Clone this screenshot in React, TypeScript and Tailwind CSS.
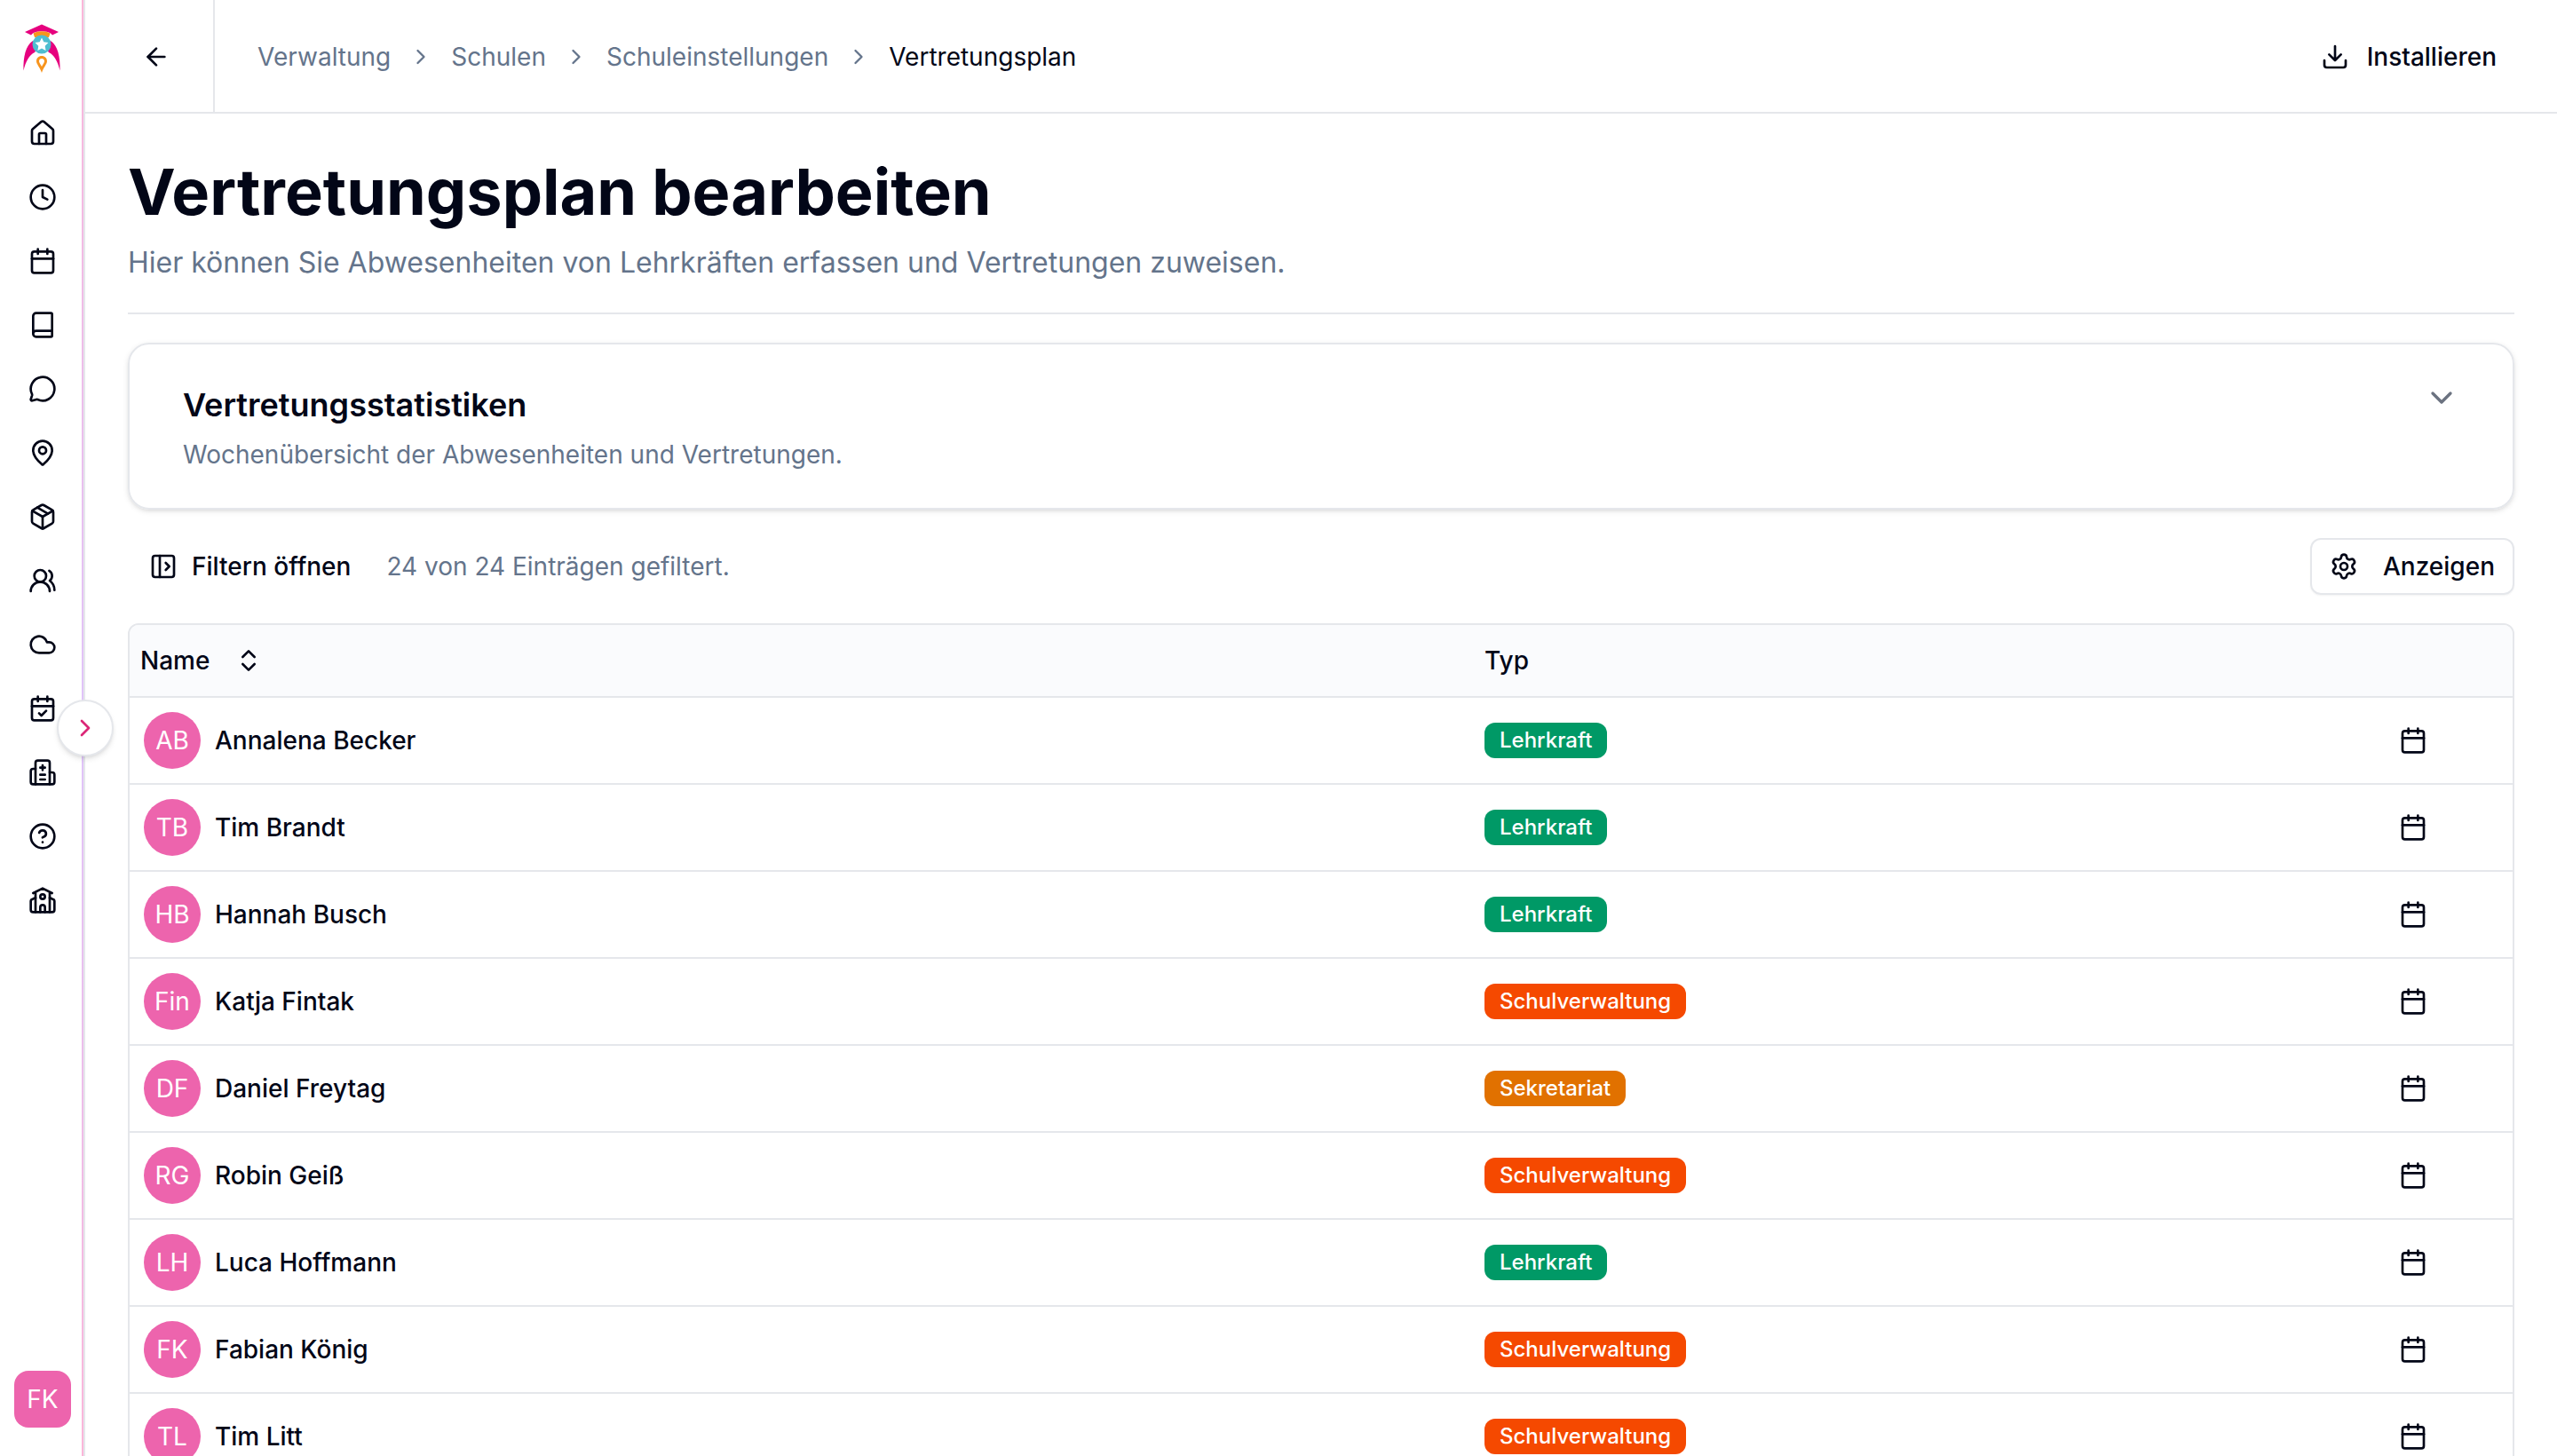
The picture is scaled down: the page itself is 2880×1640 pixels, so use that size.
import type { ReactNode } from 'react';
import {
  ArrowLeft,
  Book,
  Calendar,
  CalendarCheck,
  ChevronDown,
  ChevronRight,
  ChevronsUpDown,
  CircleQuestionMark,
  Clock,
  Cloud,
  House,
  MapPin,
  MessageCircle,
  Package,
  PanelLeftOpen,
  Settings,
  UsersRound,
} from 'lucide-react';

type Role = 'Lehrkraft' | 'Schulverwaltung' | 'Sekretariat';

interface Person {
  initials: string;
  name: string;
  role: Role;
}

const ROLE_COLORS: Record<Role, string> = {
  Lehrkraft: 'bg-[#009966]',
  Schulverwaltung: 'bg-[#f54900]',
  Sekretariat: 'bg-[#e17100]',
};

const PEOPLE: Person[] = [
  { initials: 'AB', name: 'Annalena Becker', role: 'Lehrkraft' },
  { initials: 'TB', name: 'Tim Brandt', role: 'Lehrkraft' },
  { initials: 'HB', name: 'Hannah Busch', role: 'Lehrkraft' },
  { initials: 'Fin', name: 'Katja Fintak', role: 'Schulverwaltung' },
  { initials: 'DF', name: 'Daniel Freytag', role: 'Sekretariat' },
  { initials: 'RG', name: 'Robin Geiß', role: 'Schulverwaltung' },
  { initials: 'LH', name: 'Luca Hoffmann', role: 'Lehrkraft' },
  { initials: 'FK', name: 'Fabian König', role: 'Schulverwaltung' },
  { initials: 'TL', name: 'Tim Litt', role: 'Schulverwaltung' },
];

function StrokeIcon({ children }: { children: ReactNode }) {
  return (
    <svg
      className="size-8"
      viewBox="0 0 24 24"
      fill="none"
      stroke="currentColor"
      strokeWidth="2"
      strokeLinecap="round"
      strokeLinejoin="round"
      aria-hidden="true"
    >
      {children}
    </svg>
  );
}

function HospitalIcon() {
  return (
    <StrokeIcon>
      <path d="M12 6v4M14 14h-4M14 18h-4M14 8h-4" />
      <path d="M18 12h2a2 2 0 0 1 2 2v6a2 2 0 0 1-2 2H4a2 2 0 0 1-2-2v-9a2 2 0 0 1 2-2h2" />
      <path d="M18 22V4a2 2 0 0 0-2-2H8a2 2 0 0 0-2 2v18" />
    </StrokeIcon>
  );
}

function SchoolIcon() {
  return (
    <StrokeIcon>
      <path d="M14 22v-4a2 2 0 1 0-4 0v4" />
      <path d="m18 10 2.5 1a2 2 0 0 1 1.5 2v7a2 2 0 0 1-2 2H4a2 2 0 0 1-2-2v-7a2 2 0 0 1 1.500-2L6 10" />
      <path d="M18 5v17M6 5v17M4 6l8-4 8 4" />
      <circle cx="12" cy="9" r="2" />
    </StrokeIcon>
  );
}

function DownloadIcon() {
  return (
    <StrokeIcon>
      <path d="M21 15v4a2 2 0 0 1-2 2H5a2 2 0 0 1-2-2v-4" />
      <path d="m7 10 5 5 5-5M12 15V3" />
    </StrokeIcon>
  );
}

function Logo() {
  return (
    <svg className="h-14 w-[42px]" viewBox="0 0 42 56" aria-hidden="true">
      <path d="M11 20C3 25 0 38 .5 53.500 3 43 7 36 13 33L21 24l8 9c6 3 10 10 12.500 20.500C42 38 39 25 31 20Z" fill="#e6007e" />
      <path d="M2 10 21 1.500 40 10l-7 3.500-2-2C26 8.500 16 8.500 11 11.500l-2 2Z" fill="#e6007e" />
      <path d="M11.500 11.500c5-3 14-3 19 0L29 16H13Z" fill="#f7941d" />
      <circle cx="21" cy="24" r="10.500" fill="#4fbdd0" />
      <path d="m21 16.500 2.300 4.800 5.200.7-3.800 3.700.9 5.200-4.600-2.500-4.600 2.500.9-5.200-3.800-3.700 5.200-.7Z" fill="#fff" />
      <path
        d="M21 37c3.500 0 6 2.500 6 6 0 3-4 7-6 13-2-6-6-10-6-13 0-3.500 2.500-6 6-6Zm0 3c-1.800 0-3 1.300-3 3 0 1.500 1.800 3.500 3 6 1.200-2.500 3-4.500 3-6 0-1.700-1.200-3-3-3Z"
        fill="#f7941d"
      />
    </svg>
  );
}

const NAV_ITEMS = [
  { label: 'Start', icon: <House className="size-8" /> },
  { label: 'Zeiten', icon: <Clock className="size-8" /> },
  { label: 'Kalender', icon: <Calendar className="size-8" /> },
  { label: 'Klassenbuch', icon: <Book className="size-8" /> },
  { label: 'Nachrichten', icon: <MessageCircle className="size-8" /> },
  { label: 'Orte', icon: <MapPin className="size-8" /> },
  { label: 'Inventar', icon: <Package className="size-8" /> },
  { label: 'Gruppen', icon: <UsersRound className="size-8" /> },
  { label: 'Cloud', icon: <Cloud className="size-8" /> },
  { label: 'Termine', icon: <CalendarCheck className="size-8" /> },
  { label: 'Krankmeldungen', icon: <HospitalIcon /> },
  { label: 'Hilfe', icon: <CircleQuestionMark className="size-8" /> },
  { label: 'Verwaltung', icon: <SchoolIcon /> },
];

function Sidebar() {
  return (
    <aside className="relative flex w-24 shrink-0 border-r-2 border-[#e5e7eb]">
      <div className="flex flex-1 flex-col items-center pt-[26px] pb-8 pl-1">
        <a href="#start" aria-label="Startseite" className="mr-0.5">
          <Logo />
        </a>
        <nav className="mt-13 flex flex-1 flex-col gap-10">
          {NAV_ITEMS.map((item) => (
            <a key={item.label} href="#nav" aria-label={item.label}>
              {item.icon}
            </a>
          ))}
        </nav>
        <button type="button" className="size-16 rounded-2xl bg-[#ed64ad] text-[28px] text-white">
          FK
        </button>
      </div>
      <div className="w-[2px] bg-gradient-to-b from-[#fbb6d9] via-[#dfc4fa] to-[#fbb6d9]" />
      <button
        type="button"
        aria-label="Seitenleiste öffnen"
        className="absolute top-1/2 -right-[34px] z-10 flex size-16 -translate-y-1/2 items-center justify-center rounded-full border-2 border-[#e5e7eb] bg-white text-[#db2777] shadow-md"
      >
        <ChevronRight className="size-8" />
      </button>
    </aside>
  );
}

function Header() {
  return (
    <header className="flex h-32 shrink-0 border-b-2 border-[#e5e7eb]">
      <div className="flex w-[146px] items-center justify-center border-r-2 border-[#e5e7eb] pt-0.5 pl-4">
        <button type="button" aria-label="Zurück">
          <ArrowLeft className="size-8" />
        </button>
      </div>
      <nav
        aria-label="Brotkrumen"
        className="flex flex-1 items-center gap-5 pt-0.5 pl-12 text-[28px] text-[#64748b]"
      >
        <a href="#verwaltung">Verwaltung</a>
        <ChevronRight className="size-7" />
        <a href="#schulen">Schulen</a>
        <ChevronRight className="size-7" />
        <a href="#schuleinstellungen">Schuleinstellungen</a>
        <ChevronRight className="size-7" />
        <span className="text-[#020617]">Vertretungsplan</span>
      </nav>
      <button type="button" className="mr-9 flex items-center gap-5 px-8 pt-0.5 text-[28px] font-medium">
        <DownloadIcon />
        Installieren
      </button>
    </header>
  );
}

function StatisticsCard() {
  return (
    <section className="mt-8 flex items-start justify-between rounded-3xl border-2 border-[#e5e7eb] px-15 py-10 shadow-[0_2px_6px_rgba(0,0,0,0.1),0_2px_4px_-2px_rgba(0,0,0,0.1)]">
      <div>
        <h2 className="text-[36px] leading-14 font-semibold">Vertretungsstatistiken</h2>
        <p className="mt-2 text-[28px] leading-10 text-[#64748b]">
          Wochenübersicht der Abwesenheiten und Vertretungen.
        </p>
      </div>
      <button type="button" aria-label="Statistiken aufklappen" className="text-[#6b7280]">
        <ChevronDown className="size-10" />
      </button>
    </section>
  );
}

function PersonRow({ person }: { person: Person }) {
  return (
    <tr>
      <td className="h-[98px] border-b-2 border-[#e5e7eb] px-4">
        <div className="flex items-center gap-4">
          <span className="flex size-16 items-center justify-center rounded-full bg-[#ed64ad] text-[28px] text-white">
            {person.initials}
          </span>
          <span className="font-medium">{person.name}</span>
        </div>
      </td>
      <td className="border-b-2 border-[#e5e7eb] px-4">
        <div
          className={`flex h-10 w-fit items-center rounded-xl px-[17px] text-[24px] font-medium text-white ${ROLE_COLORS[person.role]}`}
        >
          {person.role}
        </div>
      </td>
      <td className="border-b-2 border-[#e5e7eb] px-4">
        <button
          type="button"
          aria-label={`Kalender von ${person.name}`}
          className="flex size-16 items-center justify-center"
        >
          <Calendar className="size-8" />
        </button>
      </td>
    </tr>
  );
}

function PeopleTable() {
  return (
    <div className="mt-8 overflow-hidden rounded-xl border-2 border-[#e5e7eb]">
      <table className="w-full table-fixed border-separate border-spacing-0 text-left text-[28px]">
        <thead className="bg-[#fafbfd]">
          <tr>
            <th className="h-[82px] border-b-2 border-[#e5e7eb] px-3 font-medium">
              <button type="button" className="flex items-center gap-7">
                Name
                <ChevronsUpDown className="size-8" />
              </button>
            </th>
            <th className="w-[1014px] border-b-2 border-[#e5e7eb] px-4 font-medium">Typ</th>
            <th className="w-40 border-b-2 border-[#e5e7eb]" aria-label="Aktionen" />
          </tr>
        </thead>
        <tbody>
          {PEOPLE.map((person) => (
            <PersonRow key={person.name} person={person} />
          ))}
        </tbody>
      </table>
    </div>
  );
}

export default function App() {
  return (
    <div className="flex h-screen overflow-hidden bg-white font-['Inter',sans-serif] text-[#020617]">
      <Sidebar />
      <div className="flex min-w-0 flex-1 flex-col">
        <Header />
        <main className="min-h-0 flex-1 overflow-hidden px-12 pt-12">
          <div className="border-b-2 border-[#e5e7eb] pb-8">
            <h1 className="text-[72px] leading-20 font-bold">Vertretungsplan bearbeiten</h1>
            <p className="mt-4 text-[32px] leading-12 text-[#64748b]">
              Hier können Sie Abwesenheiten von Lehrkräften erfassen und Vertretungen zuweisen.
            </p>
          </div>
          <StatisticsCard />
          <div className="mt-8 flex h-16 items-center">
            <button type="button" className="flex items-center gap-4 px-6 text-[28px] font-medium">
              <PanelLeftOpen className="size-8" />
              Filtern öffnen
            </button>
            <p className="flex-1 pl-4 text-[28px] text-[#64748b]">24 von 24 Einträgen gefiltert.</p>
            <button
              type="button"
              className="flex h-16 items-center gap-7 rounded-xl border-2 border-[#e5e7eb] px-5 text-[28px] font-medium shadow-xs"
            >
              <Settings className="size-8" />
              Anzeigen
            </button>
          </div>
          <PeopleTable />
        </main>
      </div>
    </div>
  );
}
